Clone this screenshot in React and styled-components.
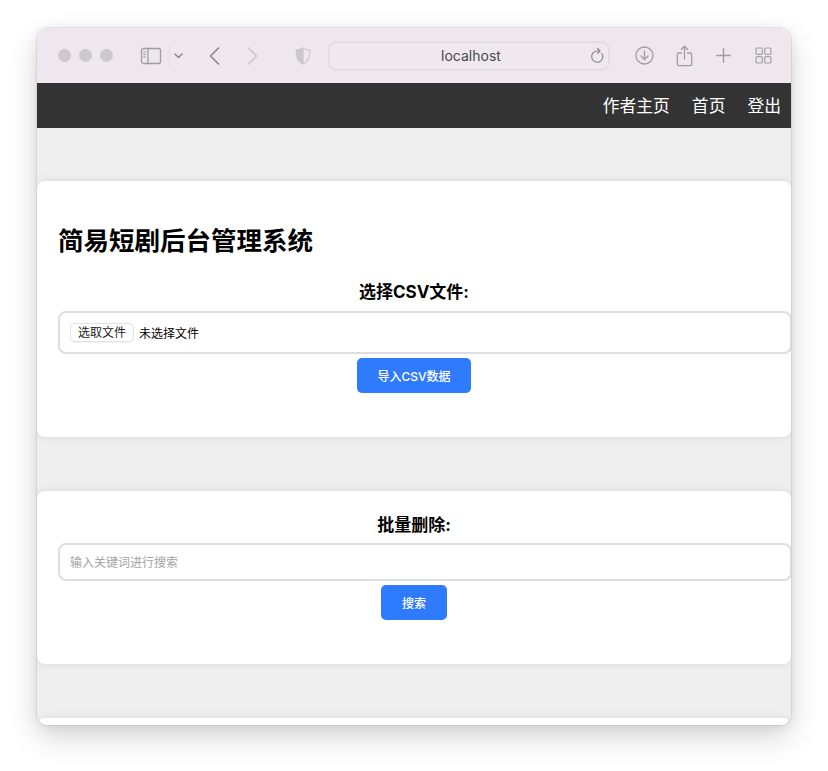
import styled, { createGlobalStyle } from "styled-components";

const GlobalStyle = createGlobalStyle`
  html, body { margin: 0; padding: 0; background: #fff; }
  body { font-family: Inter, "Noto Sans CJK SC", sans-serif; width: 828px; height: 771px; overflow: hidden; }
  * { box-sizing: border-box; }
`;

const Desktop = styled.div`
  width: 828px;
  height: 771px;
  padding: 28px 37px 46px 37px;
`;

const BrowserWindow = styled.div`
  height: 697px;
  border-radius: 11px;
  overflow: hidden;
  background: #fff;
  box-shadow: 0 0 0 1px rgba(0,0,0,.07), 0 12px 30px rgba(0,0,0,.17), 0 2px 12px rgba(0,0,0,.07);
  display: flex;
  flex-direction: column;
`;

const Toolbar = styled.div`
  height: 55px;
  flex: none;
  background: #eee8ee;
  display: flex;
  align-items: center;
  padding: 0 0 0 21px;
  color: #a9a5a9;
`;

const Lights = styled.div`
  flex: none;
  display: flex;
  gap: 8px;
  margin-right: 27px;
`;

const Light = styled.span`
  width: 13px;
  height: 13px;
  border-radius: 50%;
  background: #cdc8cd;
`;

const Divider = styled.span`
  flex: none;
  width: 1px;
  height: 20px;
  background: #e2dde2;
  margin: 0 4px 0 7px;
`;

const IconSlot = styled.svg`
  display: block;
  flex: none;
  margin-left: ${(p) => p.$left || 0}px;
  fill: none;
  stroke: ${(p) => p.$tone || "#a09ca0"};
  stroke-width: ${(p) => p.$weight || 1.5};
  stroke-linecap: round;
  stroke-linejoin: round;
`;

const AddressBar = styled.div`
  position: relative;
  flex: none;
  width: 282px;
  height: 30px;
  margin-left: 17px;
  border: 2px solid #e3dde3;
  border-radius: 9px;
  background: #efe9ef;
  display: flex;
  align-items: center;
  justify-content: center;
  font-size: 14px;
  color: #4a484a;
  padding-left: 4px;
`;

const Reload = styled.span`
  position: absolute;
  right: 3px;
  top: 4px;
  line-height: 0;
`;

const NavBar = styled.nav`
  height: 45px;
  flex: none;
  background: #333;
  display: flex;
  align-items: center;
  justify-content: flex-end;
  gap: 22px;
  padding: 1px 10px 0 0;
`;

const NavLink = styled.a`
  color: #fff;
  font-size: 16.800px;
  line-height: 44px;
  text-decoration: none;
`;

const Page = styled.main`
  flex: 1;
  min-height: 0;
  background: #efefef;
  padding-top: 53px;
  display: flex;
  flex-direction: column;
  gap: 54px;
  overflow: hidden;
`;

const Card = styled.section`
  flex: none;
  height: ${(p) => p.$height}px;
  background: #fff;
  border-radius: 8px;
  box-shadow: 0 0 8px rgba(0,0,0,.1);
  padding: ${(p) => p.$top}px 0 0 21px;
  display: flex;
  flex-direction: column;
`;

const Title = styled.h1`
  margin: 0;
  font-size: 25.500px;
  line-height: 36px;
  font-weight: 700;
  color: #000;
`;

const FieldLabel = styled.label`
  display: block;
  margin: ${(p) => p.$top || 0}px 0 0 -21px;
  text-align: center;
  font-size: 17px;
  line-height: 24px;
  font-weight: 700;
  color: #000;
`;

const FileBox = styled.div`
  width: 734px;
  height: 43px;
  margin-top: 7px;
  border: 2px solid #dedede;
  border-radius: 8px;
  display: flex;
  align-items: center;
  padding: 0 0 1px 10px;
  font-size: 12px;
  color: #000;
`;

const PickButton = styled.span`
  height: 19px;
  padding: 0 7px;
  border: 1px solid #e2e2e2;
  border-radius: 5px;
  background: #fff;
  box-shadow: 0 1px 1px rgba(0,0,0,.05);
  font-size: 12px;
  line-height: 17px;
  color: #222;
  margin-right: 5px;
`;

const SearchInput = styled.input`
  display: block;
  width: 734px;
  height: 38px;
  margin-top: 6px;
  border: 2px solid #dedede;
  border-radius: 8px;
  padding: 0 10px;
  font-family: inherit;
  font-size: 12px;
  outline: none;
  &::placeholder { color: #a3a3a3; opacity: 1; }
`;

const ButtonRow = styled.div`
  display: flex;
  justify-content: center;
  margin: ${(p) => p.$top}px 0 0 -21px;
`;

const Button = styled.button`
  height: 35px;
  width: ${(p) => p.$width}px;
  border: none;
  border-radius: 5px;
  background: #2f7bff;
  color: #fff;
  font-family: inherit;
  font-size: 12px;
  font-weight: 500;
  padding: 0 0 1px;
`;

export default function App() {
  return (
    <Desktop>
      <GlobalStyle />
      <BrowserWindow>
        <Toolbar>
          <Lights>
            <Light />
            <Light />
            <Light />
          </Lights>
          <IconSlot width="22" height="18" viewBox="0 0 22 18" $weight={1.3}>
            <rect x="1.5" y="1.5" width="19" height="15" rx="2" />
            <path d="M8 1.5v15" />
            <path d="M3.6 5h2M3.6 7.5h2M3.6 10h2" strokeWidth="1" />
          </IconSlot>
          <Divider />
          <IconSlot width="9" height="6" viewBox="0 0 9 6" $tone="#8d898d" $weight={1.5}>
            <path d="M1 1l3.5 3.5L8 1" />
          </IconSlot>
          <IconSlot width="11" height="18" viewBox="0 0 11 18" $left={26} $tone="#8f8b8f" $weight={1.7}>
            <path d="M9.5 1L1.5 9l8 8" />
          </IconSlot>
          <IconSlot width="11" height="18" viewBox="0 0 11 18" $left={27} $tone="#c9c5c9" $weight={1.7}>
            <path d="M1.5 1l8 8-8 8" />
          </IconSlot>
          <IconSlot width="16" height="18" viewBox="0 0 16 18" $left={37} $tone="#cbc7cb" $weight={1.2}>
            <path d="M8 1C5.8 2.3 3.5 3 1.3 3.2 1 9 2.800 14.300 8 17c5.200-2.700 7-8 6.700-13.800C12.500 3 10.200 2.300 8 1z" />
            <path d="M8 1C5.8 2.300 3.500 3 1.300 3.200 1 9 2.800 14.300 8 17z" fill="#cbc7cb" />
          </IconSlot>
          <AddressBar>
            localhost
            <Reload>
              <IconSlot width="16" height="17" viewBox="0 0 16 17" $tone="#8a868a" $weight={1.2}>
                <path d="M12.900 6.500A5.600 5.600 0 1 1 8 4h2.500" />
                <path d="M8.600 1.500L11 4 8.600 6.300" />
              </IconSlot>
            </Reload>
          </AddressBar>
          <IconSlot width="19" height="19" viewBox="0 0 19 19" $left={25} $weight={1.3}>
            <circle cx="9.500" cy="9.500" r="8.500" />
            <path d="M9.500 5v8.500M6 10l3.500 3.500L13 10" />
          </IconSlot>
          <IconSlot width="17" height="22" viewBox="0 0 17 22" $left={22} $weight={1.3}>
            <path d="M5.500 8H2.800A1.500 1.500 0 0 0 1.300 9.500v9.700a1.500 1.500 0 0 0 1.500 1.500h11.400a1.500 1.500 0 0 0 1.500-1.500V9.500A1.500 1.500 0 0 0 14.200 8h-2.700" />
            <path d="M8.500 14V1.500M5.300 4.500l3.200-3.200 3.200 3.200" />
          </IconSlot>
          <IconSlot width="15" height="15" viewBox="0 0 15 15" $left={23} $weight={1.4}>
            <path d="M7.500 .8v13.400M.8 7.500h13.400" />
          </IconSlot>
          <IconSlot width="17" height="17" viewBox="0 0 17 17" $left={24} $tone="#a5a1a5" $weight={1.2}>
            <rect x="1" y="1" width="6.300" height="6.300" rx="1" />
            <rect x="9.700" y="1" width="6.300" height="6.300" rx="1" />
            <rect x="1" y="9.700" width="6.300" height="6.300" rx="1" />
            <rect x="9.700" y="9.700" width="6.300" height="6.300" rx="1" />
          </IconSlot>
        </Toolbar>
        <NavBar>
          <NavLink href="#">作者主页</NavLink>
          <NavLink href="#">首页</NavLink>
          <NavLink href="#">登出</NavLink>
        </NavBar>
        <Page>
          <Card $height={256} $top={42}>
            <Title>简易短剧后台管理系统</Title>
            <FieldLabel $top={21}>选择CSV文件:</FieldLabel>
            <FileBox>
              <PickButton>选取文件</PickButton>
              未选择文件
            </FileBox>
            <ButtonRow $top={4}>
              <Button $width={114}>导入CSV数据</Button>
            </ButtonRow>
          </Card>
          <Card $height={173} $top={22}>
            <FieldLabel>批量删除:</FieldLabel>
            <SearchInput placeholder="输入关键词进行搜索" />
            <ButtonRow $top={4}>
              <Button $width={66}>搜索</Button>
            </ButtonRow>
          </Card>
          <Card $height={100} $top={0} />
        </Page>
      </BrowserWindow>
    </Desktop>
  );
}
